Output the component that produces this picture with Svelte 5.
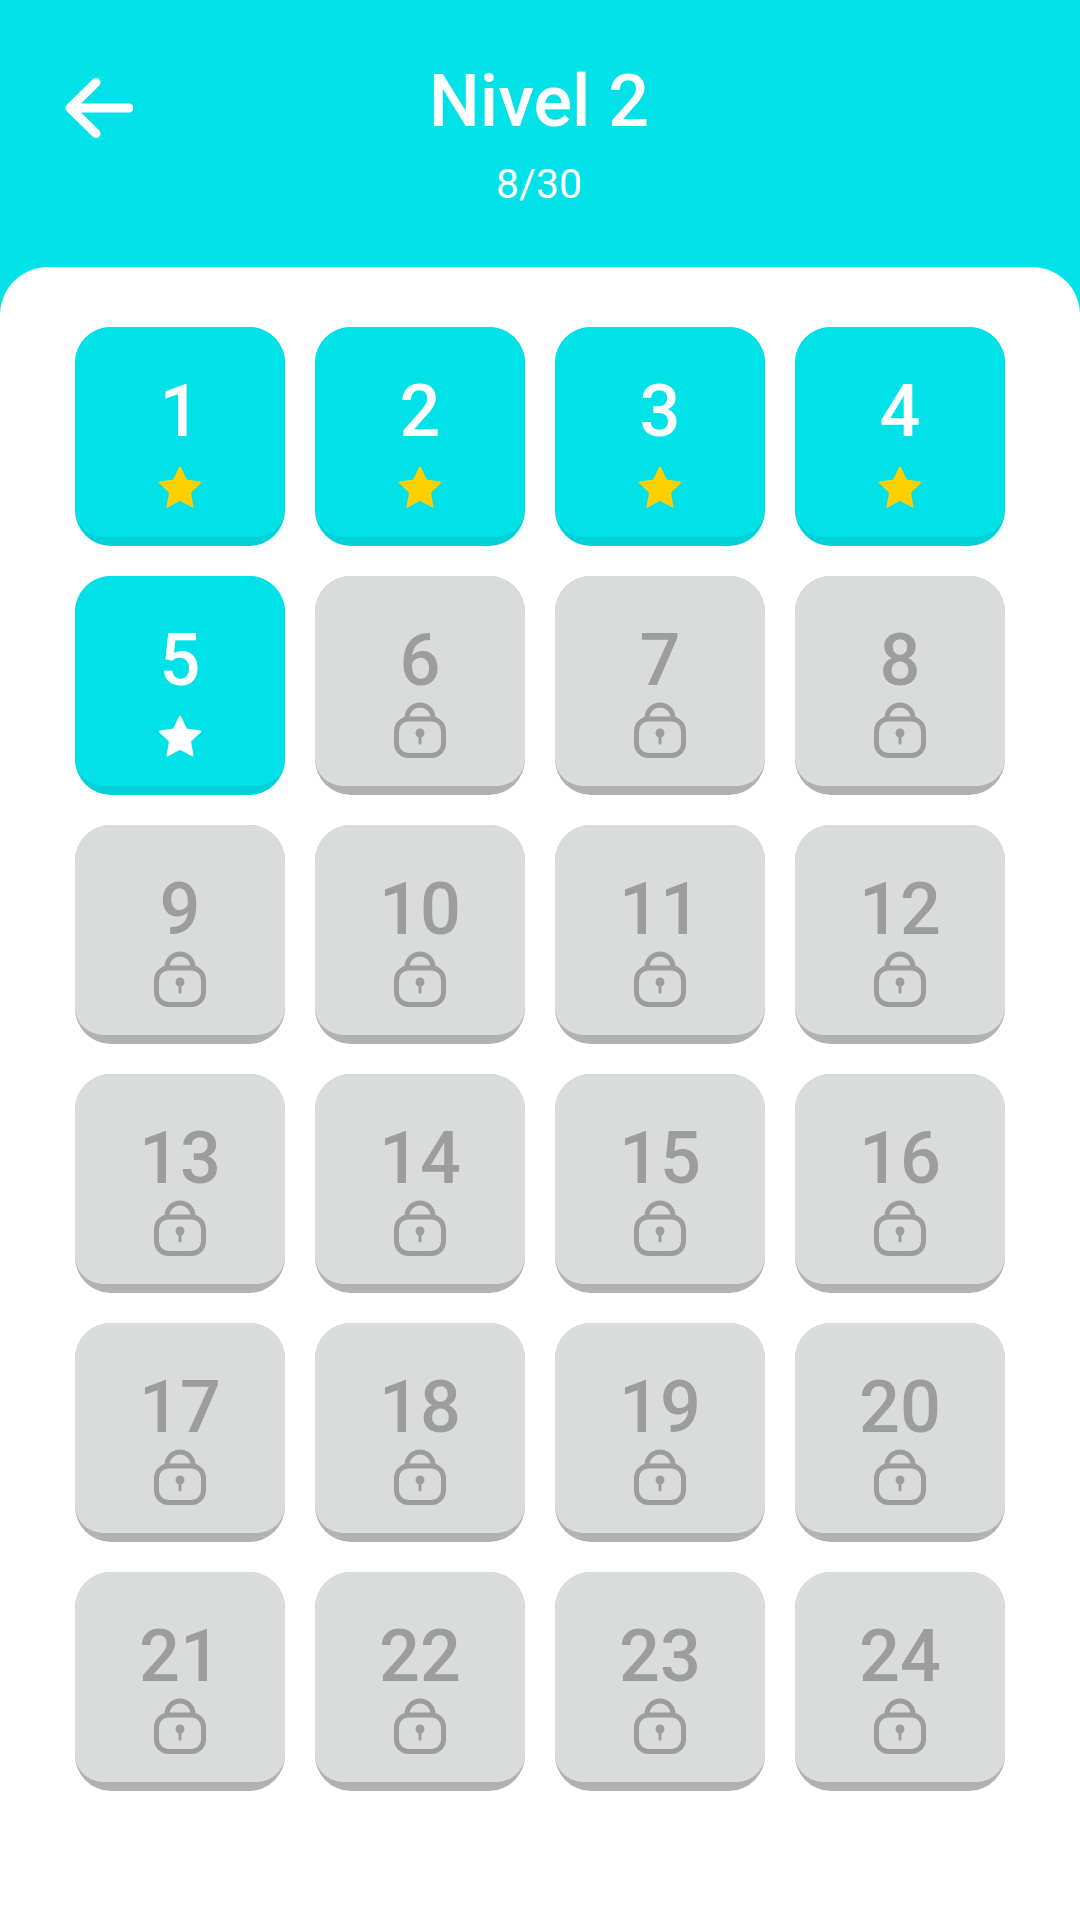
<script>
  const levels = Array.from({ length: 24 }, (_, i) => {
    const n = i + 1;
    return { n, open: n <= 5, earned: n <= 4 };
  });
</script>

<div class="page">
  <header class="top">
    <button class="back" aria-label="Back">
      <svg viewBox="0 0 68 60" width="68" height="60" fill="none" stroke="#fff" stroke-width="9" stroke-linecap="round" stroke-linejoin="round">
        <path d="M64 30H5M31 4.500 5 30l26 25.500" />
      </svg>
    </button>
    <div class="heading">
      <h1>Nivel 2</h1>
      <p>8/30</p>
    </div>
  </header>

  <main class="panel">
    <div class="grid">
      {#each levels as level}
        <div class="tile" class:open={level.open}>
          <div class="face">
            <span class="num">{level.n}</span>
            {#if level.open}
              <svg class="star" viewBox="0 0 42 40" width="44" height="42">
                <path
                  class:earned={level.earned}
                  d="M21 1.500l5.900 12.400 13.300 1.800-9.800 9.300 2.500 13.500L21 32.100 9.100 38.500l2.500-13.500-9.800-9.300 13.300-1.800z"
                />
              </svg>
            {:else}
              <svg class="lock" viewBox="0 0 54 56" width="54" height="56" fill="none" stroke="#9d9d9d" stroke-width="5">
                <rect x="3.500" y="17" width="47" height="36.500" rx="12" />
                <path d="M14 17v-1a13 13 0 0 1 26 0v1" />
                <circle cx="27" cy="31" r="4.500" fill="#9d9d9d" stroke="none" />
                <path d="M27 33v8" stroke-width="3" stroke-linecap="round" />
              </svg>
            {/if}
          </div>
        </div>
      {/each}
    </div>
  </main>
</div>

<style>
  :global(body) {
    margin: 0;
    font-family: Roboto, "Liberation Sans", sans-serif;
  }

  .page {
    height: 1920px;
    display: flex;
    flex-direction: column;
    background: #00e1e8;
    overflow: hidden;
  }

  .top {
    height: 267px;
    flex-shrink: 0;
    display: grid;
    grid-template-columns: 1fr auto 1fr;
    align-items: start;
    color: #fff;
  }

  .back {
    justify-self: start;
    margin: 78px 0 0 65px;
    padding: 0;
    border: none;
    background: none;
    line-height: 0;
  }

  .heading {
    grid-column: 2;
    padding: 60px 2px 0 0;
    text-align: center;
  }
  .heading h1 {
    margin: 0;
    font-size: 72px;
    line-height: 84px;
    font-weight: 500;
  }
  .heading p {
    margin: 15px 0 0;
    font-size: 41px;
    line-height: 50px;
    font-weight: 400;
  }

  .panel {
    flex: 1;
    background: #fff;
    border-radius: 48px 48px 0 0;
    padding: 60px 75px 0;
  }

  .grid {
    display: grid;
    grid-template-columns: repeat(4, 210px);
    grid-auto-rows: 219px;
    gap: 30px;
  }

  .tile {
    box-sizing: border-box;
    padding-bottom: 9px;
    border-radius: 36px;
    background: #b1b1b1;
    color: #9d9d9d;
  }
  .tile.open {
    background: #03d1d7;
    color: #fff;
  }

  .face {
    height: 100%;
    display: flex;
    flex-direction: column;
    align-items: center;
    padding-top: 43px;
    box-sizing: border-box;
    border-radius: 36px 36px 28px 28px;
    background: #dadbdb;
  }
  .open .face {
    background: #00e1e8;
  }

  .num {
    font-size: 72px;
    line-height: 84px;
    font-weight: 500;
  }

  .star {
    display: block;
    margin-top: 12px;
  }
  .star path { fill: #fff; stroke: #fff; stroke-width: 2; stroke-linejoin: round; }
  .star path.earned { fill: #ffd000; stroke: #ffd000; }

  .lock {
    display: block;
    margin-top: -1px;
  }
</style>
